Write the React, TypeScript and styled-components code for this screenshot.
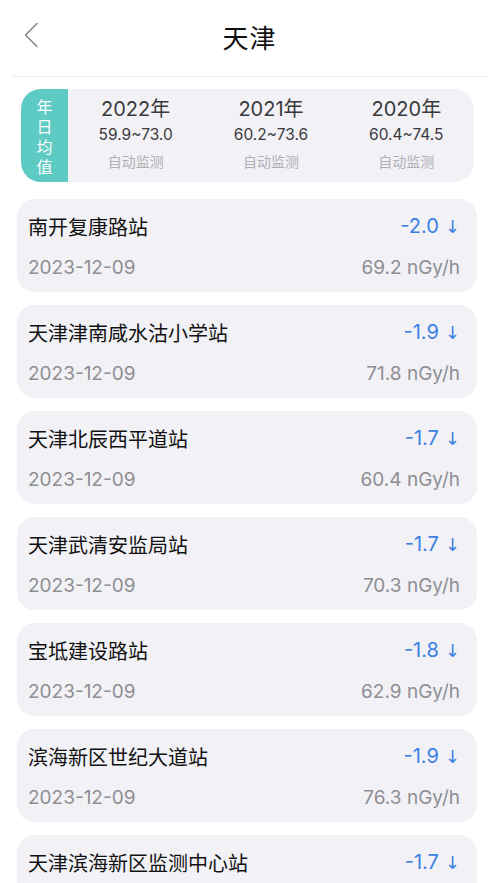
import styled, { createGlobalStyle } from 'styled-components';

const GlobalStyle = createGlobalStyle`
  html, body {
    margin: 0;
    padding: 0;
    background: #ffffff;
  }
  body {
    font-family: Inter, "Noto Sans CJK SC", sans-serif;
    -webkit-font-smoothing: antialiased;
  }
`;

const years = [
  { year: '2022年', range: '59.9~73.0' },
  { year: '2021年', range: '60.2~73.6' },
  { year: '2020年', range: '60.4~74.5' },
];

const stations = [
  { name: '南开复康路站', delta: '-2.0', value: '69.2' },
  { name: '天津津南咸水沽小学站', delta: '-1.9', value: '71.8' },
  { name: '天津北辰西平道站', delta: '-1.7', value: '60.4' },
  { name: '天津武清安监局站', delta: '-1.7', value: '70.3' },
  { name: '宝坻建设路站', delta: '-1.8', value: '62.9' },
  { name: '滨海新区世纪大道站', delta: '-1.9', value: '76.3' },
  { name: '天津滨海新区监测中心站', delta: '-1.7', value: '68.5' },
];

const App = () => {
  return (
    <Page>
      <GlobalStyle />
      <Header>
        <BackButton aria-label="返回">
          <svg width="16" height="26" viewBox="0 0 16 26" fill="none">
            <path d="M14 1.5L2.5 13L14 24.5" stroke="#8a8a8e" strokeWidth="1.6" strokeLinecap="round" strokeLinejoin="round" />
          </svg>
        </BackButton>
        <Title>天津</Title>
      </Header>

      <Summary>
        <Tag>
          <span>年</span>
          <span>日</span>
          <span>均</span>
          <span>值</span>
        </Tag>
        <YearGrid>
          {years.map(y => (
            <YearCol key={y.year}>
              <YearLabel>{y.year}</YearLabel>
              <Range>{y.range}</Range>
              <Source>自动监测</Source>
            </YearCol>
          ))}
        </YearGrid>
      </Summary>

      <List>
        {stations.map(s => (
          <Card key={s.name}>
            <Row>
              <Name>{s.name}</Name>
              <Delta>{s.delta}<Arrow>↓</Arrow></Delta>
            </Row>
            <Row>
              <Muted>2023-12-09</Muted>
              <Muted>{s.value} nGy/h</Muted>
            </Row>
          </Card>
        ))}
      </List>
    </Page>
  );
};

const Page = styled.div`
  width: 497px;
  height: 883px;
  overflow: hidden;
  background: #ffffff;
`;

const Header = styled.header`
  position: relative;
  height: 77px;
  margin: 0 10px 0 12px;
  border-bottom: 1px solid #ebebed;
  display: flex;
  align-items: center;
  justify-content: center;
  padding-bottom: 4px;
  box-sizing: border-box;
`;

const BackButton = styled.button`
  position: absolute;
  left: 11px;
  top: 22px;
  padding: 0;
  border: none;
  background: none;
  display: flex;
`;

const Title = styled.h1`
  margin: 0;
  font-size: 26px;
  font-weight: 400;
  color: #111;
  letter-spacing: 1px;
  font-family: "Noto Sans CJK SC", sans-serif;
`;

const Summary = styled.section`
  margin: 12px 23px 0 21px;
  height: 93px;
  border-radius: 20px;
  background: #f1f1f6;
  display: flex;
  overflow: hidden;
`;

const Tag = styled.div`
  width: 47px;
  flex-shrink: 0;
  background: #5dcbc3;
  color: #fff;
  font-size: 16px;
  line-height: 20px;
  display: flex;
  flex-direction: column;
  align-items: center;
  justify-content: center;
  font-family: "Noto Sans CJK SC", sans-serif;
`;

const YearGrid = styled.div`
  flex: 1;
  display: grid;
  grid-template-columns: repeat(3, 1fr);
`;

const YearCol = styled.div`
  display: flex;
  flex-direction: column;
  align-items: center;
  justify-content: center;
  padding-bottom: 2px;
`;

const YearLabel = styled.div`
  font-size: 20px;
  line-height: 28px;
  color: #3a3a3c;
`;

const Range = styled.div`
  font-size: 15.5px;
  line-height: 24px;
  color: #3a3a3c;
`;

const Source = styled.div`
  font-size: 14px;
  line-height: 28px;
  color: #b0b0b5;
  font-family: "Noto Sans CJK SC", sans-serif;
`;

const List = styled.div`
  margin: 17px 20px 0 17px;
  display: flex;
  flex-direction: column;
  gap: 13px;
`;

const Card = styled.div`
  height: 93px;
  box-sizing: border-box;
  border-radius: 18px;
  background: #f1f1f6;
  padding: 14px 17px 0 11px;
  display: flex;
  flex-direction: column;
  gap: 15px;
`;

const Row = styled.div`
  display: flex;
  justify-content: space-between;
  align-items: center;
  height: 26px;
`;

const Name = styled.div`
  font-size: 20px;
  color: #111;
  font-family: "Noto Sans CJK SC", sans-serif;
`;

const Delta = styled.div`
  font-size: 20px;
  color: #3b80e2;
  display: flex;
  align-items: center;
  gap: 6px;
`;

const Arrow = styled.span`
  font-size: 18px;
  font-family: "DejaVu Sans", sans-serif;
`;

const Muted = styled.div`
  font-size: 19px;
  color: #8e8e93;
`;

export default App;
